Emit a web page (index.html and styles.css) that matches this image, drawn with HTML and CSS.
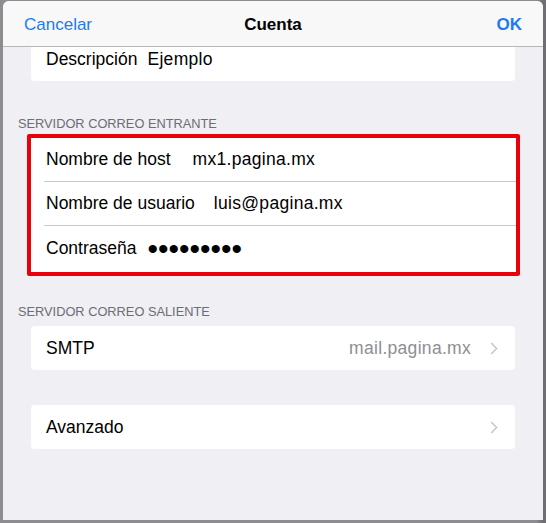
FILE: index.html
```html
<!DOCTYPE html>
<html lang="es">
  <head>
    <meta charset="UTF-8" />
    <meta name="viewport" content="width=device-width, initial-scale=1.0" />
    <title>Cuenta</title>
    <link rel="stylesheet" href="styles.css">
  </head>
  <body>
    <div class="sheet">
      <div class="navbar">
        <a href="#" class="nav-btn">Cancelar</a>
        <span class="nav-title">Cuenta</span>
        <a href="#" class="nav-btn nav-done">OK</a>
      </div>

      <div class="content">
        <div class="card card-desc">
          <div class="row">
            <span class="label label-desc">Descripción</span>
            <span class="value">Ejemplo</span>
          </div>
        </div>

        <div class="section-header header-in">SERVIDOR CORREO ENTRANTE</div>
        <div class="highlight">
          <div class="card card-plain">
            <div class="row">
              <span class="label label-host">Nombre de host</span>
              <span class="value">mx1.pagina.mx</span>
            </div>
            <div class="row">
              <span class="label label-user">Nombre de usuario</span>
              <span class="value">luis@pagina.mx</span>
            </div>
            <div class="row">
              <span class="label label-pass">Contraseña</span>
              <span class="dots">•••••••••</span>
            </div>
          </div>
        </div>

        <div class="section-header header-out">SERVIDOR CORREO SALIENTE</div>
        <div class="card">
          <div class="row">
            <span class="label">SMTP</span>
            <span class="detail">mail.pagina.mx</span>
            <svg class="chevron" width="8" height="13" viewBox="0 0 8 13">
              <polyline points="1.2,1 6.6,6.5 1.2,12" fill="none" stroke="#c7c7cc" stroke-width="1.6" />
            </svg>
          </div>
        </div>

        <div class="card card-adv">
          <div class="row">
            <span class="label">Avanzado</span>
            <span class="detail"></span>
            <svg class="chevron" width="8" height="13" viewBox="0 0 8 13">
              <polyline points="1.2,1 6.6,6.5 1.2,12" fill="none" stroke="#c7c7cc" stroke-width="1.6" />
            </svg>
          </div>
        </div>
      </div>
    </div>
  </body>
</html>
```

FILE: styles.css
```css
body {
  margin: 0;
  height: 523px;
  overflow: hidden;
  background: linear-gradient(to right, #8c8c91 0, #8c8c91 536px, #6e6e73 543px);
  font-family: "Liberation Sans", Arial, sans-serif;
  -webkit-font-smoothing: antialiased;
}
.sheet {
  margin: 1px 3px 0 3px;
  height: 519px;
  background: #efeff4;
  border-radius: 6px 6px 0 0;
  overflow: hidden;
}
.navbar {
  position: relative;
  z-index: 1;
  height: 43px;
  display: flex;
  align-items: center;
  justify-content: space-between;
  padding: 2px 21px 0 21px;
  background: #f8f8f8;
  border-bottom: 1px solid #b7b7bb;
}
.nav-btn {
  color: #1a7cf0;
  font-size: 17px;
  text-decoration: none;
  width: 100px;
}
.nav-done {
  text-align: right;
  font-weight: bold;
}
.nav-title {
  font-size: 17px;
  font-weight: bold;
  color: #000;
}
.content {
  margin-top: -10px;
}
.card {
  margin: 0 28px;
  background: #fff;
  border-radius: 4px;
}
.card-desc {
  border-radius: 0 0 4px 4px;
}
.card-adv {
  margin-top: 35px;
}
.row {
  height: 44px;
  display: flex;
  align-items: center;
  padding: 0 17px 0 15px;
  font-size: 17.5px;
  color: #000;
}
.value {
  letter-spacing: 0.3px;
}
.card-plain {
  margin: 0;
  border-radius: 0;
  padding-bottom: 2px;
}
.card-plain .row {
  height: 43px;
  border-bottom: 1px solid #c8c7cc;
  margin-left: 13px;
  padding-left: 2px;
}
.card-plain .row:last-child {
  border-bottom: none;
  height: 44px;
}
.label-desc {
  margin-right: 10px;
}
.label-host {
  margin-right: 22px;
}
.label-user {
  margin-right: 19px;
}
.label-pass {
  margin-right: 11px;
}
.dots {
  font-size: 30px;
  line-height: 1;
  margin-top: 1px;
}
.detail {
  flex: 1;
  text-align: right;
  color: #8e8e93;
  letter-spacing: 0.3px;
  margin-right: 19px;
}
.section-header {
  padding-left: 15px;
  font-size: 12.8px;
  line-height: 16px;
  color: #6d6d72;
}
.header-in {
  margin: 35px 0 2px;
}
.header-out {
  margin: 28px 0 6px;
}
.highlight {
  margin: 0 23px 0 24px;
  border: 4px solid #e8000b;
  border-radius: 2px;
}
```
